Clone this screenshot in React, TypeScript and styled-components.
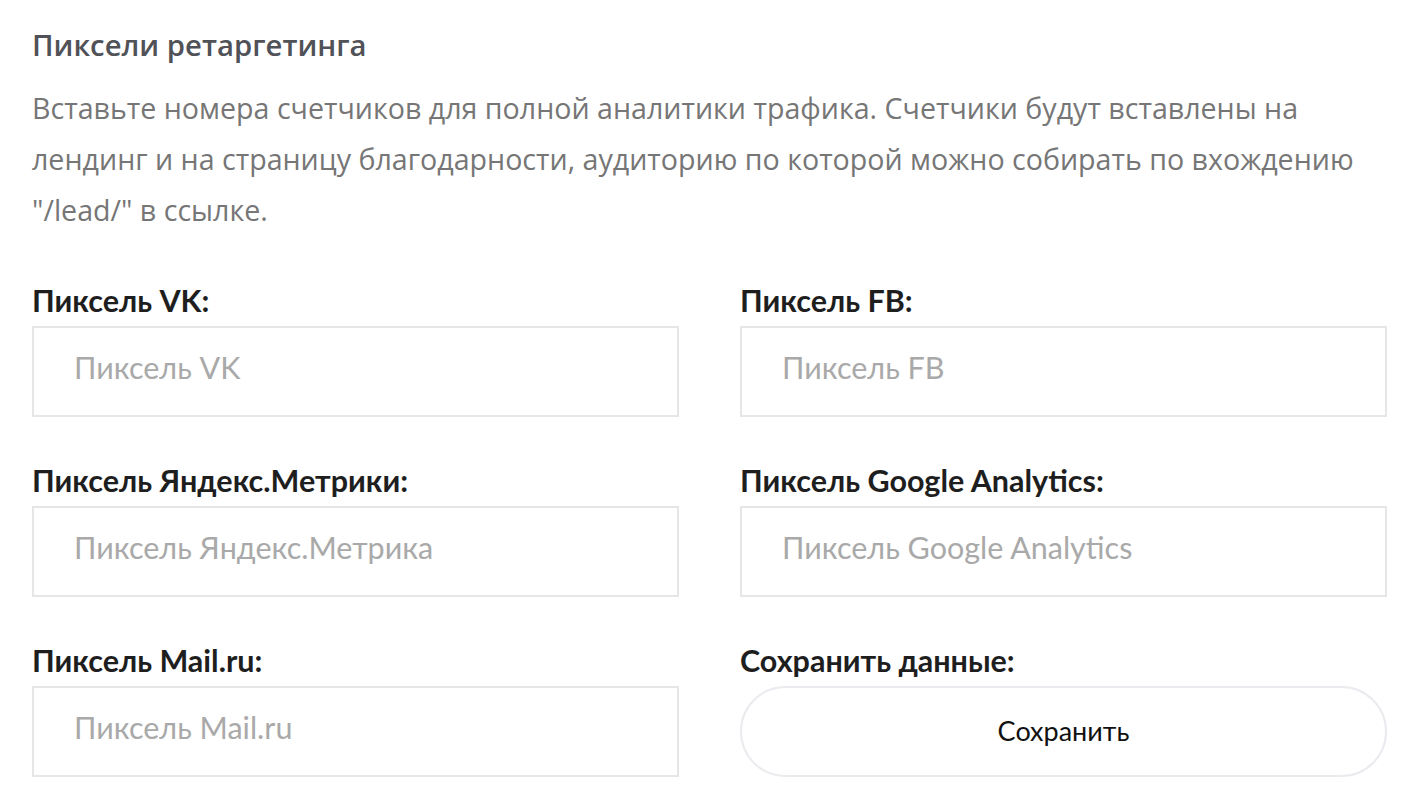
import React from "react";
import styled, { createGlobalStyle } from "styled-components";

const Global = createGlobalStyle`
  html, body { margin: 0; padding: 0; background: #ffffff; }
  body { font-family: "Open Sans", "Liberation Sans", sans-serif; }
  * { box-sizing: border-box; }
`;

const Page = styled.div`
  width: 1416px;
  padding: 28px 0 0 32px;
`;

const Title = styled.h2`
  margin: 0;
  font-family: "Open Sans", sans-serif;
  font-weight: 600;
  font-size: 29.3px;
  line-height: 34px;
  color: #505257;
`;

const Description = styled.p`
  margin: 20px 0 0 0;
  font-family: "Open Sans", sans-serif;
  font-weight: 400;
  font-size: 28.6px;
  line-height: 51px;
  color: #767676;
  white-space: nowrap;
`;

const Grid = styled.div`
  margin-top: 48px;
  display: grid;
  grid-template-columns: 647px 647px;
  column-gap: 61px;
  row-gap: 46px;
`;

const Field = styled.div`
  display: flex;
  flex-direction: column;
  gap: 9px;
`;

const Label = styled.label`
  font-family: "Lato", sans-serif;
  font-weight: 700;
  font-size: 30.5px;
  line-height: 34px;
  color: #1e1e1e;
`;

const Input = styled.input`
  width: 100%;
  height: 91px;
  border: 2px solid #e6e6e6;
  border-radius: 0;
  padding: 0 0 10px 40px;
  font-family: "Lato", sans-serif;
  font-size: 30.5px;
  color: #333;
  outline: none;
  background: #fff;
  &::placeholder { color: #a9a9a9; }
`;

const SaveButton = styled.button`
  width: 100%;
  height: 91px;
  border: 2px solid #ebebef;
  border-radius: 46px;
  background: #fff;
  font-family: "Lato", sans-serif;
  font-size: 27px;
  color: #111;
  cursor: pointer;
  padding: 0 0 2px 0;
`;

const fields = [
  { label: "Пиксель VK:", placeholder: "Пиксель VK" },
  { label: "Пиксель FB:", placeholder: "Пиксель FB" },
  { label: "Пиксель Яндекс.Метрики:", placeholder: "Пиксель Яндекс.Метрика" },
  { label: "Пиксель Google Analytics:", placeholder: "Пиксель Google Analytics" },
  { label: "Пиксель Mail.ru:", placeholder: "Пиксель Mail.ru" },
];

export default function App() {
  return (
    <>
      <Global />
      <Page>
        <Title>Пиксели ретаргетинга</Title>
        <Description>
          Вставьте номера счетчиков для полной аналитики трафика. Счетчики будут вставлены на
          <br />
          лендинг и на страницу благодарности, аудиторию по которой можно собирать по вхождению
          <br />
          "/lead/" в ссылке.
        </Description>
        <Grid>
          {fields.map((f) => (
            <Field key={f.label}>
              <Label>{f.label}</Label>
              <Input placeholder={f.placeholder} />
            </Field>
          ))}
          <Field>
            <Label>Сохранить данные:</Label>
            <SaveButton>Сохранить</SaveButton>
          </Field>
        </Grid>
      </Page>
    </>
  );
}
